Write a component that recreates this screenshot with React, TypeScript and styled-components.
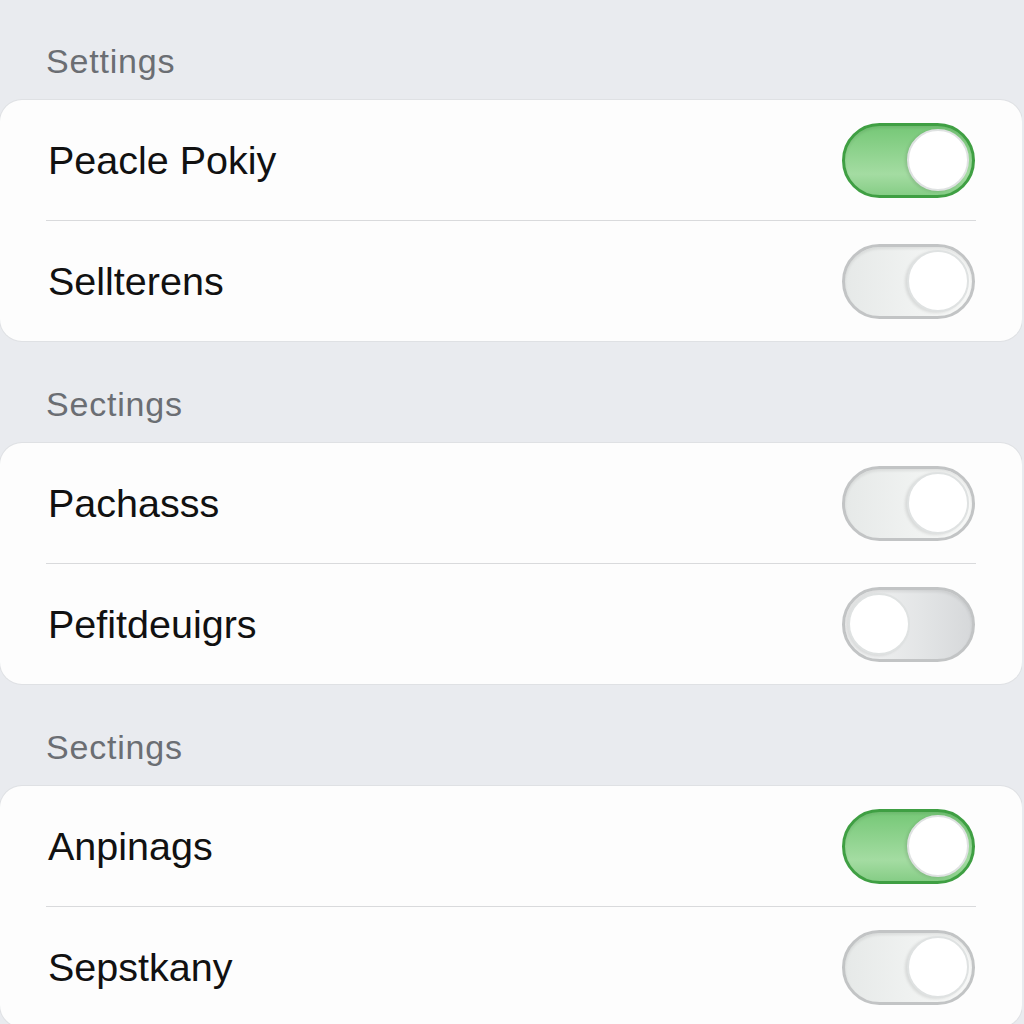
import styled, {createGlobalStyle} from "styled-components";

const GlobalStyle = createGlobalStyle`
  html, body {
    margin: 0;
    padding: 0;
    background: #e9ebef;
  }
  body {
    font-family: "Liberation Sans", Arial, sans-serif;
  }
`;

type Item = {
  label: string;
  tone: "green" | "gray";
  knob: "left" | "right";
};

type Group = {
  title: string;
  items: Item[];
};

const groups: Group[] = [
  {
    title: "Settings",
    items: [
      {label: "Peacle Pokiy", tone: "green", knob: "right"},
      {label: "Sellterens", tone: "gray", knob: "right"},
    ],
  },
  {
    title: "Sectings",
    items: [
      {label: "Pachasss", tone: "gray", knob: "right"},
      {label: "Pefitdeuigrs", tone: "gray", knob: "left"},
    ],
  },
  {
    title: "Sectings",
    items: [
      {label: "Anpinags", tone: "green", knob: "right"},
      {label: "Sepstkany", tone: "gray", knob: "right"},
    ],
  },
];

const App = () => {
  return (
    <>
      <GlobalStyle />
      <Page>
        {groups.map((group, gi) => (
          <Section key={gi}>
            <Title>{group.title}</Title>
            <Card>
              {group.items.map((item, i) => (
                <Row key={item.label} $divider={i > 0}>
                  <Label>{item.label}</Label>
                  <Switch $tone={item.tone} $knob={item.knob}>
                    <Knob />
                  </Switch>
                </Row>
              ))}
            </Card>
          </Section>
        ))}
      </Page>
    </>
  );
};

export default App;

const Page = styled.div`
  width: 1022px;
  height: 1024px;
  overflow: hidden;
  display: flex;
  flex-direction: column;
`;

const Section = styled.section`
  display: flex;
  flex-direction: column;

  &:first-child > h2 {
    height: 100px;
  }
`;

const Title = styled.h2`
  margin: 0;
  height: 102px;
  box-sizing: border-box;
  padding: 0 0 19px 46px;
  display: flex;
  align-items: flex-end;
  font-size: 34px;
  line-height: 40px;
  font-weight: 400;
  letter-spacing: 0.8px;
  color: #6b6e73;
`;

const Card = styled.div`
  background: #fdfdfd;
  border-radius: 22px;
  box-shadow: 0 0 0 1px #dfe1e4;
  display: flex;
  flex-direction: column;
`;

const Row = styled.div<{$divider: boolean}>`
  height: 120px;
  display: flex;
  align-items: center;
  justify-content: space-between;
  padding: 0 47px 0 48px;
  position: relative;
  ${(p) => (p.$divider ? "margin-top: 1px;" : "")}

  &::before {
    content: "";
    display: ${(p) => (p.$divider ? "block" : "none")};
    position: absolute;
    top: -1px;
    left: 46px;
    right: 46px;
    height: 1px;
    background: #d9dadc;
  }
`;

const Label = styled.span`
  font-size: 39.5px;
  color: #111111;
`;

const Switch = styled.div<{$tone: "green" | "gray"; $knob: "left" | "right"}>`
  width: 133px;
  height: 75px;
  box-sizing: border-box;
  border-radius: 38px;
  border: 3.5px solid ${(p) => (p.$tone === "green" ? "#3f9f43" : "#c2c4c5")};
  background: ${(p) =>
    p.$tone === "green"
      ? "linear-gradient(180deg, #76c877 0%, #a4dca2 70%, #86cd86 100%)"
      : p.$knob === "left"
      ? "linear-gradient(90deg, #f4f5f5 0%, #e3e5e6 60%, #d6d8da 100%)"
      : "linear-gradient(90deg, #e6e9e8 0%, #f1f3f2 60%, #f8f9f8 100%)"};
  box-shadow: inset 0 2px 3px rgba(0, 0, 0, 0.08);
  display: flex;
  align-items: center;
  justify-content: ${(p) => (p.$knob === "right" ? "flex-end" : "flex-start")};
  padding: 0 3px;
`;

const Knob = styled.div`
  width: 62px;
  height: 62px;
  border-radius: 50%;
  background: #ffffff;
  box-sizing: border-box;
  border: 2px solid #dfe2e2;
  box-shadow: -2px 1px 3px rgba(0, 0, 0, 0.1);
`;
